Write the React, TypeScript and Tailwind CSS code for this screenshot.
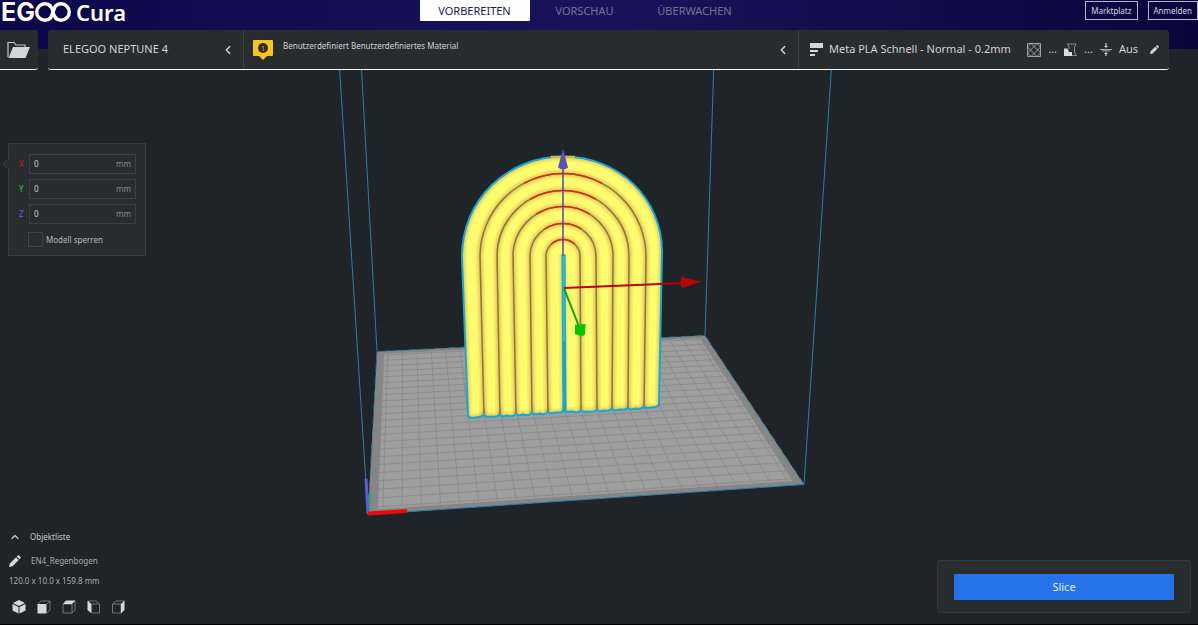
import { useState } from "react";
import { ChevronLeft, ChevronUp } from "lucide-react";

type Point = [number, number];

const STAGES = ["VORBEREITEN", "VORSCHAU", "ÜBERWACHEN"];

const AXES = [
  { name: "X", color: "text-[#c41e1e]" },
  { name: "Y", color: "text-[#2cc84a]" },
  { name: "Z", color: "text-[#6a5fe0]" },
];

// Build plate corners: front left, front right, back right, back left
const PLATE: Point[] = [[368, 515], [804, 485], [705, 336], [377, 352]];
const PLATE_MM = 235;

// Projects plate coordinates (0..1) into the viewport
function project(u: number, v: number): Point {
  const [[x0, y0], [x1, y1], [x2, y2], [x3, y3]] = PLATE;
  const dx1 = x1 - x2;
  const dx2 = x3 - x2;
  const dy1 = y1 - y2;
  const dy2 = y3 - y2;
  const sx = x0 - x1 + x2 - x3;
  const sy = y0 - y1 + y2 - y3;
  const det = dx1 * dy2 - dx2 * dy1;
  const g = (sx * dy2 - dx2 * sy) / det;
  const h = (dx1 * sy - sx * dy1) / det;
  const w = g * u + h * v + 1;
  return [
    ((x1 - x0 + g * x1) * u + (x3 - x0 + h * x3) * v + x0) / w,
    ((y1 - y0 + g * y1) * u + (y3 - y0 + h * y3) * v + y0) / w,
  ];
}

function line(a: Point, b: Point) {
  return `M${a[0].toFixed(1)} ${a[1].toFixed(1)}L${b[0].toFixed(1)} ${b[1].toFixed(1)}`;
}

const LOW = 5 / PLATE_MM;
const HIGH = 1 - LOW;

const GRID = Array.from({ length: 23 }, (_, i) => {
  const t = (7.5 + i * 10) / PLATE_MM;
  return line(project(t, LOW), project(t, HIGH)) + line(project(LOW, t), project(HIGH, t));
}).join("");

const INNER_PLATE = [project(LOW, LOW), project(HIGH, LOW), project(HIGH, HIGH), project(LOW, HIGH)]
  .map((p) => p.join(","))
  .join(" ");

// Grooves between the tubes of the rainbow, outermost first
const GROOVES = [
  { r: 83, left: 484, right: 644, yl: 416, yr: 408, red: 28 },
  { r: 66, left: 500, right: 628, yl: 415, yr: 409, red: 30 },
  { r: 50, left: 516, right: 612, yl: 414, yr: 410, red: 32 },
  { r: 33, left: 532, right: 597, yl: 414, yr: 410, red: 34 },
  { r: 17, left: 548, right: 581, yl: 413, yr: 411, red: 44 },
];

function groovePath(g: (typeof GROOVES)[number]) {
  return `M${g.left} ${g.yl}L${563 - g.r} 257A${g.r} ${g.r} 0 0 1 ${563 + g.r} 257L${g.right} ${g.yr}`;
}

function redArc(r: number, deg: number) {
  const a = (deg * Math.PI) / 180;
  const dx = r * Math.sin(a);
  const y = 257 - r * Math.cos(a);
  return `M${563 - dx} ${y}A${r} ${r} 0 0 1 ${563 + dx} ${y}`;
}

const OUTLINE =
  "M468 415L462 259C461 199 509 157 563 157C619 157 662 199 662 252L659 404Q659 408 651 408Q645 409 644 407Q642 410 636 409Q629 411 628 408Q626 411 620 410Q613 412 612 409Q610 412 604 411Q598 413 597 410Q595 413 588 412Q582 413 581 411Q578 414 572 412Q565 413 564 411Q561 414 556 413Q549 415 548 412Q545 416 540 414Q533 416 532 413Q529 417 523 415Q517 417 516 414Q513 418 507 416Q501 418 500 415Q497 418 491 417Q485 418 484 415Q481 418 475 418Q468 419 468 415Z";

function Viewport() {
  return (
    <svg
      viewBox="0 0 1198 625"
      preserveAspectRatio="xMidYMid slice"
      className="absolute inset-0 h-full w-full"
      role="img"
      aria-label="EN4_Regenbogen"
    >
      <defs>
        <clipPath id="model">
          <path d={OUTLINE} />
        </clipPath>
      </defs>

      {/* Build plate */}
      <polygon points={PLATE.map((p) => p.join(",")).join(" ")} fill="#858787" />
      <polygon points={INNER_PLATE} fill="#9e9e9e" />
      <path d={GRID} stroke="#888888" strokeWidth="0.8" fill="none" />

      {/* Build volume */}
      <g stroke="#2a80a2" strokeWidth="1" fill="none">
        <path d="M339 60L368 515L804 485L832 60" />
        <path d="M361 60L377 352M714 60L705 336" />
        <path d="M368 515L377 352L705 336L804 485" strokeDasharray="7 6" />
      </g>
      <path d="M368 514L370 494" stroke="#22b14c" strokeWidth="2.5" />
      <path d="M368 514L366 479" stroke="#5f5be0" strokeWidth="3" />
      <path d="M368 514L407 511.500" stroke="#ea0c0c" strokeWidth="4" />

      {/* Model */}
      <path d={OUTLINE} fill="#fffd6e" />
      <g clipPath="url(#model)" fill="none">
        {[9, 6, 4].map((width) => (
          <g key={width} stroke="#cf9a4a" strokeOpacity="0.16" strokeWidth={width}>
            {GROOVES.map((g) => (
              <path key={g.r} d={groovePath(g)} />
            ))}
            <path d={OUTLINE} />
            <path d="M563 255L564 412" />
          </g>
        ))}
        {GROOVES.map((g) => (
          <path key={g.r} d={groovePath(g)} stroke="#8a7a45" strokeWidth="1.6" />
        ))}
        {GROOVES.map((g) => (
          <path key={g.r} d={redArc(g.r, g.red)} stroke="#cf2f12" strokeWidth="1.5" />
        ))}
      </g>
      <path d={OUTLINE} fill="none" stroke="#16a8d6" strokeWidth="2" />
      <path d="M551 157.500L575 157.500" stroke="#c3bd55" strokeWidth="2.500" />
      <path d="M563.500 255L564.500 412" stroke="#16a3cf" strokeWidth="4" />
      <path d="M563.500 256L564 342" stroke="#22bfe0" strokeWidth="2" />

      {/* Move handles */}
      <path d="M563 168V256" stroke="#5147a5" strokeWidth="1.5" />
      <path d="M563 149L568 168Q563 172 558 168Z" fill="#5a52bd" />
      <path d="M564 288.500L684 283.500" stroke="#b80505" strokeWidth="2" />
      <path d="M681 277.500L702 282L682 288.500Q680 283 681 277.500Z" fill="#b90404" />
      <path d="M564 289L579 327" stroke="#0aa30a" strokeWidth="2" />
      <path d="M575 325L585.500 324.500L585 335L582 337L575 334.500Z" fill="#04c404" />
    </svg>
  );
}

function Logo() {
  return (
    <div className="flex h-6 flex-1 items-center pl-px text-white" aria-label="ELEGOO Cura">
      <span className="font-['Inter'] text-[25px] leading-6 font-bold">EG</span>
      <svg width="36" height="20" viewBox="0 0 36 20" fill="none" stroke="currentColor" strokeWidth="3.4" className="shrink-0">
        <path d="M15.800 4.300A8.200 8.200 0 1 0 15.800 15.700L20.200 4.300A8.200 8.200 0 1 1 20.200 15.700" strokeLinejoin="round" />
        <path d="M14 2.900Q17 5 18 10T22 17.100" />
      </svg>
      <span className="ml-[5px] text-[22px] leading-6 font-semibold">Cura</span>
    </div>
  );
}

function FolderIcon() {
  return (
    <svg width="24" height="18" viewBox="0 0 24 18">
      <path d="M1 16V1.500H7L9 4H18V6" fill="none" stroke="#c4c8ca" strokeWidth="1.200" />
      <path d="M6 6H23L18.500 17H1.500Z" fill="#d3d6d8" />
    </svg>
  );
}

function MaterialIcon() {
  return (
    <svg width="20" height="20" viewBox="0 0 20 20">
      <path d="M1 0H19Q20 0 20 1V15Q20 16 19 16H14L10 20L6 16H1Q0 16 0 15V1Q0 0 1 0Z" fill="#fcc419" />
      <circle cx="10" cy="8" r="5" fill="#2b2d2a" />
      <text x="10" y="11" textAnchor="middle" fontSize="7" fill="#e5b62a">1</text>
    </svg>
  );
}

function QualityIcon() {
  return (
    <svg width="13" height="13" viewBox="0 0 13 13" fill="#d3d6d8" className="shrink-0">
      <path d="M0 0H13V5H0ZM0 7H8V9H0ZM0 11H5V13H0Z" />
    </svg>
  );
}

function InfillIcon() {
  return (
    <svg width="14" height="14" viewBox="0 0 14 14" fill="none" stroke="#b7bbbd" strokeWidth="0.8">
      <path d="M.5.5H13.500V13.500H.5ZM.5 4L4 .5L13.500 10L10 13.500L.5 4M10 .5L13.500 4L4 13.500L.5 10L10 .5" />
    </svg>
  );
}

function SupportIcon() {
  return (
    <svg width="13" height="14" viewBox="0 0 13 14">
      <path d="M3.500 1H12L10.500 4V9L12.500 12.500H7M3.500 1L5 4V6" fill="none" stroke="#a3a7a9" strokeWidth="0.8" />
      <path d="M0 5.500H3.500L5 9H8V13H0Z" fill="#d9dbdd" />
    </svg>
  );
}

function AdhesionIcon() {
  return (
    <svg width="12" height="14" viewBox="0 0 12 14" fill="#c9cccd">
      <path d="M5.400 0H6.600V3H8L6 5L4 3H5.400ZM5.400 13V11H4L6 9L8 11H6.600V13Z" />
      <path d="M0 6H12V6.800H0ZM2 7.600H10V8.200H2Z" />
    </svg>
  );
}

function PencilIcon({ size }: { size: number }) {
  return (
    <svg width={size} height={size} viewBox="0 0 12 12" fill="#d3d6d8">
      <path d="M0 12L.8 8.400L7 2.200L9.800 5L3.600 11.200ZM7.700 1.500L8.700.5Q9.400-.2 10.200.6L11.400 1.800Q12.200 2.600 11.500 3.300L10.500 4.300Z" />
    </svg>
  );
}

// Camera presets; the lit face tells the direction
const VIEWS = [
  { label: "3D-Ansicht", solid: "M7 0L13 3L7 6L1 3ZM.5 4L6.500 7V13.500L.5 10.500ZM13.500 4L7.500 7V13.500L13.500 10.500Z", wire: "" },
  { label: "Vorderansicht", solid: "M.5 4H9.500V13.500H.5Z", wire: "M1 4L4 1H13V10L10 13M10 4L13 1" },
  { label: "Draufsicht", solid: "M1 4L4 .5H13.500L10 4Z", wire: "M1 4H10V13H1ZM10 13L13 10V1" },
  { label: "Ansicht von links", solid: "M.5 .5L4.500 4V13.500L.5 10Z", wire: "M5 4H12.500V13H5M1 1H9L12.500 4" },
  { label: "Ansicht von rechts", solid: "M9 4L12.500 .5V10L9 13.500Z", wire: "M.5 4H9V13H.5ZM.5 4L4 1H12.500" },
];

function PositionPanel() {
  const [position, setPosition] = useState<Record<string, string>>({ X: "0", Y: "0", Z: "0" });
  const [locked, setLocked] = useState(false);

  return (
    <section className="relative ml-2 w-[138px] border border-[#373c3e] bg-[#272c2e] pt-[10px] pr-[9px] pb-2 pl-[10px]">
      <svg width="8" height="14" viewBox="0 0 8 14" className="absolute top-[13px] -left-[7px]">
        <path d="M8 0L1 7L8 14" fill="#272c2e" stroke="#373c3e" />
      </svg>
      <div className="flex flex-col gap-[5px]">
        {AXES.map((axis) => (
          <div key={axis.name} className="flex items-center">
            <label htmlFor={`pos-${axis.name}`} className={`w-[10px] text-[8px] ${axis.color}`}>
              {axis.name}
            </label>
            <div className="flex h-5 flex-1 items-center border border-[#3b4042] px-1">
              <input
                id={`pos-${axis.name}`}
                value={position[axis.name]}
                onChange={(e) => setPosition({ ...position, [axis.name]: e.target.value })}
                className="w-full min-w-0 bg-transparent text-[8px] text-[#d0d3d4] outline-none"
              />
              <span className="text-[8px] text-[#868a8c]">mm</span>
            </div>
          </div>
        ))}
      </div>
      <label className="mt-2 ml-[9px] flex items-center gap-[3px] text-[8px] text-[#b4b8ba]">
        <input
          type="checkbox"
          checked={locked}
          onChange={(e) => setLocked(e.target.checked)}
          className="size-[15px] appearance-none border border-[#3f4446] checked:bg-[#2672e8]"
        />
        Modell sperren
      </label>
    </section>
  );
}

export default function App() {
  const [stage, setStage] = useState("VORBEREITEN");

  return (
    <div className="relative flex min-h-screen flex-col overflow-hidden border-b border-black bg-[#1e2427] font-['Noto_Sans',sans-serif]">
      <Viewport />

      <header className="relative flex h-[49px] items-start bg-linear-to-r from-[#0b0749] via-[#18145a] to-[#09063c] pr-[30px]">
        <Logo />
        <nav className="flex">
          {STAGES.map((name) => (
            <button
              key={name}
              onClick={() => setStage(name)}
              className={`h-[21px] w-[110px] rounded-b-[1px] text-[11px] leading-5 ${
                stage === name ? "bg-white text-[#1b1754]" : "text-[#76729c]"
              }`}
            >
              {name}
            </button>
          ))}
        </nav>
        <div className="flex-1">
          <div className="-mr-[30px] flex justify-end gap-[10px] pt-px text-[8px] text-[#d5d4e4]">
            <button className="h-[19px] border border-[#b5b3cf] px-[5px]">Marktplatz</button>
            <button className="h-[19px] border border-[#b5b3cf] px-[5px]">Anmelden</button>
          </div>
        </div>
      </header>

      <div className="relative -mt-[19px] flex h-10 gap-[10px] pr-[29px] text-[11px] text-[#d0d3d4]">
        <button
          aria-label="Datei öffnen"
          className="flex w-[38px] items-center rounded-r-[3px] border-b border-white bg-[#272c2e] pl-[7px]"
        >
          <FolderIcon />
        </button>
        <div className="flex flex-1 rounded-[3px] border-b border-white bg-[#272c2e]">
          <button className="flex w-[196px] items-center justify-between border-r border-[#3b4042] pr-2 pl-[15px]">
            ELEGOO NEPTUNE 4
            <ChevronLeft size={14} strokeWidth={2.5} />
          </button>
          <button className="flex flex-1 items-center border-r border-[#3b4042] pr-2 pl-[9px] text-left">
            <MaterialIcon />
            <span className="ml-[10px] flex-1 pb-2 text-[8px]">Benutzerdefiniert Benutzerdefiniertes Material</span>
            <ChevronLeft size={14} strokeWidth={2.5} />
          </button>
          <button className="flex w-[370px] items-center pr-[10px] pl-[11px]">
            <QualityIcon />
            <span className="ml-[6px] flex-1 text-left whitespace-nowrap">Meta PLA Schnell - Normal - 0.2mm</span>
            <span className="flex items-center gap-[7px]">
              <InfillIcon />
              <span>...</span>
              <SupportIcon />
              <span>...</span>
              <AdhesionIcon />
              <span>Aus</span>
            </span>
            <span className="ml-3">
              <PencilIcon size={9} />
            </span>
          </button>
        </div>
      </div>

      <main className="relative flex flex-1 items-end justify-between pt-[73px]">
        <div className="flex flex-col justify-between gap-4 self-stretch">
          <PositionPanel />
          <section className="pb-[10px] pl-[9px] text-[8px] text-[#a9adaf]">
            <button className="flex h-5 items-center gap-[9px] text-[#c4c8ca]">
              <ChevronUp size={12} strokeWidth={2.5} />
              Objektliste
            </button>
            <button className="mt-1 flex h-5 items-center gap-[10px]">
              <PencilIcon size={12} />
              EN4_Regenbogen
            </button>
            <p className="leading-5">120.0 x 10.0 x 159.8 mm</p>
            <div className="mt-[9px] flex gap-[11px] pl-[3px]">
              {VIEWS.map((view) => (
                <button key={view.label} aria-label={view.label}>
                  <svg width="14" height="14" viewBox="0 0 14 14">
                    <path d={view.wire} fill="none" stroke="#85898b" strokeWidth="0.8" />
                    <path d={view.solid} fill="#d6d9da" />
                  </svg>
                </button>
              ))}
            </div>
          </section>
        </div>

        <section className="mr-[7px] mb-[11px] w-[254px] rounded-[3px] border border-[#34393b] bg-[#272c2e] px-4 py-3">
          <button className="h-[26px] w-full rounded-[1px] bg-[#2672e8] text-[11px] text-[#e6effc]">Slice</button>
        </section>
      </main>
    </div>
  );
}
